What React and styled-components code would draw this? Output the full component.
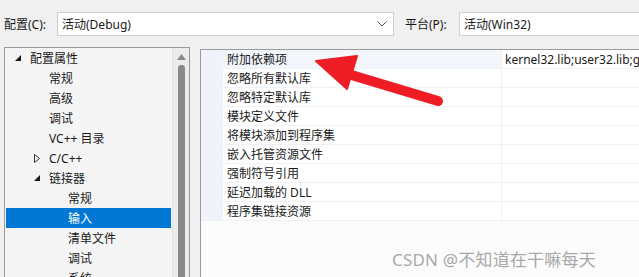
import React from "react";
import styled, { createGlobalStyle } from "styled-components";

const Global = createGlobalStyle`
  html, body { margin: 0; padding: 0; background: #f0f0f0; overflow: hidden; }
  body { font-family: "Noto Sans", "Noto Sans CJK SC", sans-serif; font-size: 12px; color: #1a1a1a; }
`;

const Page = styled.div`
  position: relative;
  width: 639px;
  height: 277px;
  overflow: hidden;
  display: flex;
  flex-direction: column;
`;

const TopBar = styled.div`
  height: 47px;
  flex-shrink: 0;
  display: flex;
  align-items: center;
  padding: 0 0 0 4px;
  box-sizing: border-box;
`;

const Label = styled.span`
  width: ${(p) => p.$w}px;
  flex-shrink: 0;
  font-size: 12px;
  white-space: nowrap;
`;

const Combo = styled.div`
  box-sizing: border-box;
  height: 24px;
  width: ${(p) => p.$w}px;
  margin-right: ${(p) => p.$mr || 0}px;
  background: #fff;
  border: 1px solid #cfcfcf;
  display: flex;
  align-items: center;
  padding: 0 0 0 4px;
  flex-shrink: 0;
`;

const ComboText = styled.span`
  flex: 1;
  font-size: 12px;
`;

const Chevron = styled.svg`
  width: 10px;
  height: 6px;
  margin-right: 6px;
`;

const Body = styled.div`
  flex: 1;
  min-height: 0;
  overflow: hidden;
  display: flex;
  align-items: flex-start;
  padding-left: 4px;
  gap: 10px;
`;

const TreePanel = styled.div`
  width: 186px;
  flex-shrink: 0;
  box-sizing: border-box;
  border: 1px solid #9a9a9a;
  border-bottom: none;
  background: #f5f5f5;
  display: flex;
`;

const TreeList = styled.div`
  flex: 1;
  padding: 0 1px;
  border-right: 1px solid #e2e2e2;
`;

const TreeRow = styled.div`
  height: 20px;
  display: flex;
  align-items: center;
  padding-left: ${(p) => 9 + p.$level * 19}px;
  background: ${(p) => (p.$selected ? "#0078d4" : "transparent")};
  color: ${(p) => (p.$selected ? "#fff" : "#1a1a1a")};
  font-size: 12px;
  white-space: nowrap;
`;

const Toggle = styled.span`
  width: 15px;
  height: 20px;
  display: flex;
  align-items: center;
  justify-content: flex-start;
  flex-shrink: 0;
`;

const ScrollBar = styled.div`
  width: 16px;
  background: #ececec;
  display: flex;
  flex-direction: column;
  align-items: center;
  padding-top: 6px;
  gap: 5px;
`;

const Thumb = styled.div`
  width: 7px;
  flex: 1;
  background: #8a8a8a;
  border-radius: 3px 3px 0 0;
`;

const GridPanel = styled.div`
  flex: 1;
  align-self: stretch;
  margin-top: 2px;
  border-top: 1px solid #9a9a9a;
  border-left: 1px solid #9a9a9a;
  background: #fcfcfc;
  min-width: 0;
`;

const GridRow = styled.div`
  display: flex;
  height: 19px;
  border-bottom: 1px solid #eef1f6;
  box-sizing: border-box;
`;

const Gutter = styled.div`
  width: 22px;
  flex-shrink: 0;
  background: #f0f4fa;
`;

const NameCell = styled.div`
  width: 279px;
  flex-shrink: 0;
  display: flex;
  align-items: center;
  padding-left: 4px;
  box-sizing: border-box;
  background: ${(p) => (p.$hl ? "#f3f6fb" : "#fff")};
  border-right: 1px solid #eef1f6;
  font-size: 12px;
  white-space: nowrap;
`;

const ValueCell = styled.div`
  flex: 1;
  display: flex;
  align-items: center;
  padding-left: 3px;
  background: #fff;
  font-size: 12px;
  white-space: nowrap;
  overflow: hidden;
  font-family: "Noto Sans", sans-serif;
`;

const ArrowSvg = styled.svg`
  position: absolute;
  left: 0;
  top: 0;
  pointer-events: none;
`;

const Watermark = styled.div`
  position: absolute;
  left: 392px;
  top: 246px;
  font-size: 17px;
  color: #a8a8a8;
  font-family: "Noto Sans", "Noto Sans CJK SC", sans-serif;
  letter-spacing: 0.2px;
  white-space: nowrap;
`;

const Expanded = () => (
  <svg width="6" height="6" viewBox="0 0 6 6">
    <polygon points="6,0 6,6 0,6" fill="#1a1a1a" />
  </svg>
);
const Collapsed = () => (
  <svg width="6" height="9" viewBox="0 0 6 9">
    <polygon points="0.5,0.5 5.5,4.5 0.5,8.5" fill="none" stroke="#333" strokeWidth="1" />
  </svg>
);

const tree = [
  { t: "配置属性", l: 0, tg: "e" },
  { t: "常规", l: 1 },
  { t: "高级", l: 1 },
  { t: "调试", l: 1 },
  { t: "VC++ 目录", l: 1 },
  { t: "C/C++", l: 1, tg: "c" },
  { t: "链接器", l: 1, tg: "e" },
  { t: "常规", l: 2 },
  { t: "输入", l: 2, sel: true },
  { t: "清单文件", l: 2 },
  { t: "调试", l: 2 },
  { t: "系统", l: 2 },
];

const rows = [
  ["附加依赖项", "kernel32.lib;user32.lib;gdi32.lib;winspool.lib"],
  ["忽略所有默认库", ""],
  ["忽略特定默认库", ""],
  ["模块定义文件", ""],
  ["将模块添加到程序集", ""],
  ["嵌入托管资源文件", ""],
  ["强制符号引用", ""],
  ["延迟加载的 DLL", ""],
  ["程序集链接资源", ""],
];

export default function App() {
  return (
    <>
      <Global />
      <Page>
        <TopBar>
          <Label $w={53}>配置(C):</Label>
          <Combo $w={337} $mr={11}>
            <ComboText>活动(Debug)</ComboText>
            <Chevron viewBox="0 0 10 6">
              <polyline points="0.5,0.5 5,5 9.5,0.5" fill="none" stroke="#555" strokeWidth="1" />
            </Chevron>
          </Combo>
          <Label $w={54}>平台(P):</Label>
          <Combo $w={200}>
            <ComboText>活动(Win32)</ComboText>
          </Combo>
        </TopBar>
        <Body>
          <TreePanel>
            <TreeList>
              {tree.map((r, i) => (
                <TreeRow key={i} $level={r.l} $selected={r.sel}>
                  <Toggle>{r.tg === "e" ? <Expanded /> : r.tg === "c" ? <Collapsed /> : null}</Toggle>
                  {r.t}
                </TreeRow>
              ))}
            </TreeList>
            <ScrollBar>
              <svg width="9" height="6" viewBox="0 0 9 6">
                <polygon points="4.5,0 9,6 0,6" fill="#8a8a8a" />
              </svg>
              <Thumb />
            </ScrollBar>
          </TreePanel>
          <GridPanel>
            {rows.map((r, i) => (
              <GridRow key={i}>
                <Gutter />
                <NameCell $hl={i === 0}>{r[0]}</NameCell>
                <ValueCell>{r[1]}</ValueCell>
              </GridRow>
            ))}
          </GridPanel>
        </Body>
        <ArrowSvg width="639" height="277" viewBox="0 0 639 277">
          <line x1="338" y1="71" x2="438" y2="101" stroke="#ee1c24" strokeWidth="10" strokeLinecap="round" />
          <polygon points="316,61 357,56 347,89" fill="#ee1c24" stroke="#ee1c24" strokeWidth="2" strokeLinejoin="round" />
        </ArrowSvg>
        <Watermark>CSDN @不知道在干嘛每天</Watermark>
      </Page>
    </>
  );
}
